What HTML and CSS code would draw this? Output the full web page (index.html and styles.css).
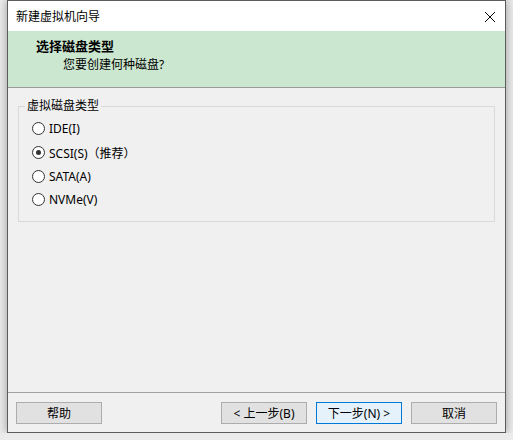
FILE: index.html
```html
<!DOCTYPE html>
<html lang="zh-CN">
<head>
    <meta charset="UTF-8">
    <title>新建虚拟机向导</title>
    <link rel="stylesheet" href="styles.css">
</head>
<body>

<div class="window">
    <div class="titlebar">
        <span class="title">新建虚拟机向导</span>
        <svg class="closeBtn" width="12" height="12" viewBox="0 0 12 12">
            <path d="M1 1 L11 11 M11 1 L1 11" stroke="#000" stroke-width="1" fill="none"/>
        </svg>
    </div>

    <div class="header">
        <div class="headerTitle">选择磁盘类型</div>
        <div class="headerSub">您要创建何种磁盘?</div>
    </div>

    <div class="content">
        <fieldset class="group">
            <legend>虚拟磁盘类型</legend>
            <label class="option"><input type="radio" name="disk"> IDE(I)</label>
            <label class="option"><input type="radio" name="disk" checked> SCSI(S)（推荐）</label>
            <label class="option"><input type="radio" name="disk"> SATA(A)</label>
            <label class="option"><input type="radio" name="disk"> NVMe(V)</label>
        </fieldset>
    </div>

    <div class="footer">
        <button class="btn">帮助</button>
        <div class="spacer"></div>
        <button class="btn">&lt; 上一步(B)</button>
        <button class="btn btnDefault">下一步(N) &gt;</button>
        <button class="btn">取消</button>
    </div>
</div>

</body>
</html>
```

FILE: styles.css
```css
body {
    margin: 0;
    background: #ebebeb;
    font-family: "Microsoft YaHei", "Noto Sans", "Noto Sans CJK SC", sans-serif;
    font-size: 12px;
    color: #000;
}
.window {
    margin-left: 7px;
    width: 497px;
    height: 431px;
    border: 1px solid #5c5c5c;
    background: #f0f0f0;
    display: flex;
    flex-direction: column;
    box-shadow: 0 0 9px rgba(0, 0, 0, 0.35);
}
.titlebar {
    height: 30px;
    background: #fff;
    display: flex;
    align-items: center;
    padding: 0 9px 0 8px;
    justify-content: space-between;
}
.closeBtn {
    margin-top: 1px;
}
/* Green banner with step title */
.header {
    height: 57px;
    background: #cce7cf;
    border-bottom: 1px solid #9a9a9a;
    padding-top: 6px;
    box-sizing: border-box;
}
.headerTitle {
    font-weight: bold;
    font-size: 13px;
    line-height: 18px;
    padding-left: 28px;
}
.headerSub {
    line-height: 18px;
    padding-left: 55px;
    margin-top: 1px;
}
.content {
    flex: 1;
    padding: 10px 10px 0 10px;
}
.group {
    margin: 0;
    padding: 3px 0 0 6px;
    border: 1px solid #d9d9d9;
    height: 124px;
    box-sizing: border-box;
}
.group legend {
    padding: 0 2px;
    line-height: 16px;
}
.option {
    display: flex;
    align-items: center;
    height: 23.7px;
    padding-left: 7px;
    gap: 4px;
}
.option input {
    appearance: none;
    margin: 0;
    width: 13px;
    height: 13px;
    border: 1px solid #333;
    border-radius: 50%;
    background: #fff;
    box-sizing: border-box;
    display: grid;
    place-items: center;
}
.option input:checked::after {
    content: "";
    width: 5px;
    height: 5px;
    border-radius: 50%;
    background: #333;
}
.footer {
    border-top: 1px solid #a0a0a0;
    padding: 9px 8px 8px 8px;
    display: flex;
    gap: 9px;
}
.spacer {
    flex: 1;
}
.btn {
    width: 86px;
    height: 22px;
    border: 1px solid #adadad;
    background: #e1e1e1;
    font-family: inherit;
    font-size: 12px;
    color: #000;
    padding: 0;
}
.btnDefault {
    border-color: #0078d7;
    background: #e5f1fb;
}
```
